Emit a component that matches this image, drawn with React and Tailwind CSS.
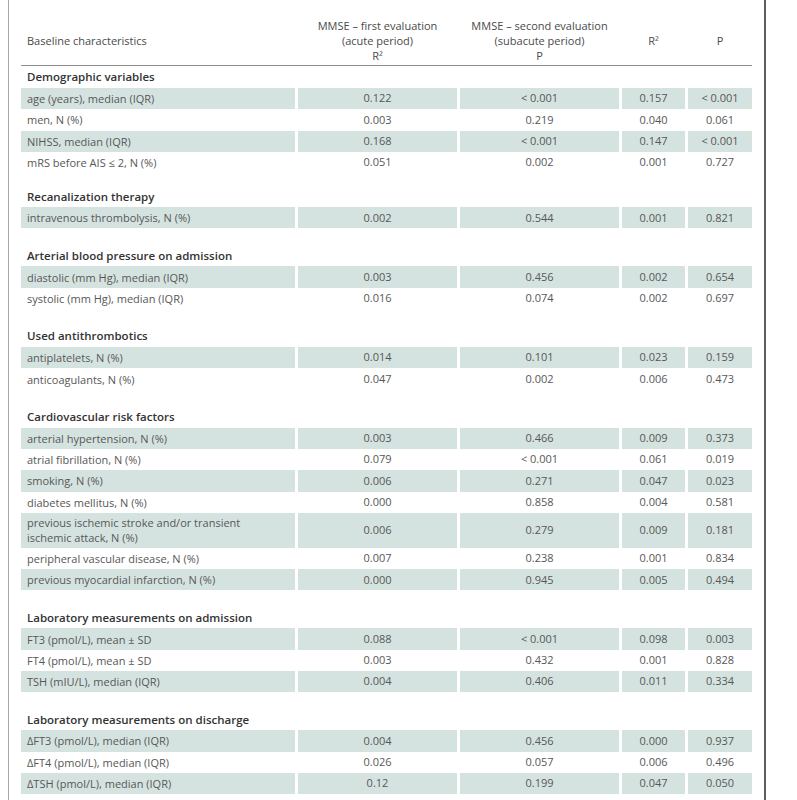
import React from "react";

const sections = [
  {
    title: "Demographic variables",
    mt: "",
    rows: [
      ["age (years), median (IQR)", "0.122", "< 0.001", "0.157", "< 0.001"],
      ["men, N (%)", "0.003", "0.219", "0.040", "0.061"],
      ["NIHSS, median (IQR)", "0.168", "< 0.001", "0.147", "< 0.001"],
      ["mRS before AIS ≤ 2, N (%)", "0.051", "0.002", "0.001", "0.727"],
    ],
  },
  {
    title: "Recanalization therapy",
    mt: "mt-[12px]",
    rows: [["intravenous thrombolysis, N (%)", "0.002", "0.544", "0.001", "0.821"]],
  },
  {
    title: "Arterial blood pressure on admission",
    mt: "mt-[16px]",
    rows: [
      ["diastolic (mm Hg), median (IQR)", "0.003", "0.456", "0.002", "0.654"],
      ["systolic (mm Hg), median (IQR)", "0.016", "0.074", "0.002", "0.697"],
    ],
  },
  {
    title: "Used antithrombotics",
    mt: "mt-[16px]",
    rows: [
      ["antiplatelets, N (%)", "0.014", "0.101", "0.023", "0.159"],
      ["anticoagulants, N (%)", "0.047", "0.002", "0.006", "0.473"],
    ],
  },
  {
    title: "Cardiovascular risk factors",
    mt: "mt-[16px]",
    rows: [
      ["arterial hypertension, N (%)", "0.003", "0.466", "0.009", "0.373"],
      ["atrial fibrillation, N (%)", "0.079", "< 0.001", "0.061", "0.019"],
      ["smoking, N (%)", "0.006", "0.271", "0.047", "0.023"],
      ["diabetes mellitus, N (%)", "0.000", "0.858", "0.004", "0.581"],
      [["previous ischemic stroke and/or transient", "ischemic attack, N (%)"], "0.006", "0.279", "0.009", "0.181"],
      ["peripheral vascular disease, N (%)", "0.007", "0.238", "0.001", "0.834"],
      ["previous myocardial infarction, N (%)", "0.000", "0.945", "0.005", "0.494"],
    ],
  },
  {
    title: "Laboratory measurements on admission",
    mt: "mt-[16px]",
    rows: [
      ["FT3 (pmol/L), mean ± SD", "0.088", "< 0.001", "0.098", "0.003"],
      ["FT4 (pmol/L), mean ± SD", "0.003", "0.432", "0.001", "0.828"],
      ["TSH (mIU/L), median (IQR)", "0.004", "0.406", "0.011", "0.334"],
    ],
  },
  {
    title: "Laboratory measurements on discharge",
    mt: "mt-[16px]",
    rows: [
      ["ΔFT3 (pmol/L), median (IQR)", "0.004", "0.456", "0.000", "0.937"],
      ["ΔFT4 (pmol/L), median (IQR)", "0.026", "0.057", "0.006", "0.496"],
      ["ΔTSH (pmol/L), median (IQR)", "0.12", "0.199", "0.047", "0.050"],
    ],
  },
];

const grid = "grid grid-cols-[274px_159px_159px_63px_64px] gap-x-[3px]";

function Row({ cells, shaded }) {
  const double = Array.isArray(cells[0]);
  const bg = shaded ? "bg-[#d5e3e0]" : "bg-white";
  const h = double ? "h-[35px]" : "h-[21.3px]";
  return (
    <div className={grid}>
      <div className={`${bg} ${h} flex flex-col justify-center pl-[6px] leading-[15px]`}>
        {double ? (
          <>
            <span>{cells[0][0]}</span>
            <span>{cells[0][1]}</span>
          </>
        ) : (
          <span>{cells[0]}</span>
        )}
      </div>
      {cells.slice(1).map((c, i) => (
        <div key={i} className={`${bg} ${h} flex items-center justify-center`}>
          {c}
        </div>
      ))}
    </div>
  );
}

export default function App() {
  return (
    <div
      className="w-[797px] h-[800px] bg-white overflow-hidden text-[#575757] text-[11px]"
      style={{ fontFamily: '"Open Sans", "Liberation Sans", sans-serif' }}
    >
      <div className="ml-[8px] w-[758px] h-[800px] border-l border-l-[#a8a8a8] border-r-2 border-r-[#5e5e5e] pl-[12px]">
        <div className="w-[731px]">
          <div className={`${grid} border-b border-[#8c8c8c] pt-[18px] pb-[2px] leading-[15px] text-[#4a4a4a]`}>
            <div className="pl-[6px] flex items-center">Baseline characteristics</div>
            <div className="text-center">
              <div>MMSE – first evaluation</div>
              <div>(acute period)</div>
              <div>R²</div>
            </div>
            <div className="text-center">
              <div>MMSE – second evaluation</div>
              <div>(subacute period)</div>
              <div>P</div>
            </div>
            <div className="flex items-center justify-center">R²</div>
            <div className="flex items-center justify-center">P</div>
          </div>
          {sections.map((s, si) => (
            <div key={si} className={s.mt}>
              <div className="h-[22px] flex items-center pl-[6px] font-semibold text-[#333] text-[11.5px]">
                {s.title}
              </div>
              {s.rows.map((r, ri) => (
                <Row key={ri} cells={r} shaded={ri % 2 === 0} />
              ))}
            </div>
          ))}
        </div>
      </div>
    </div>
  );
}
